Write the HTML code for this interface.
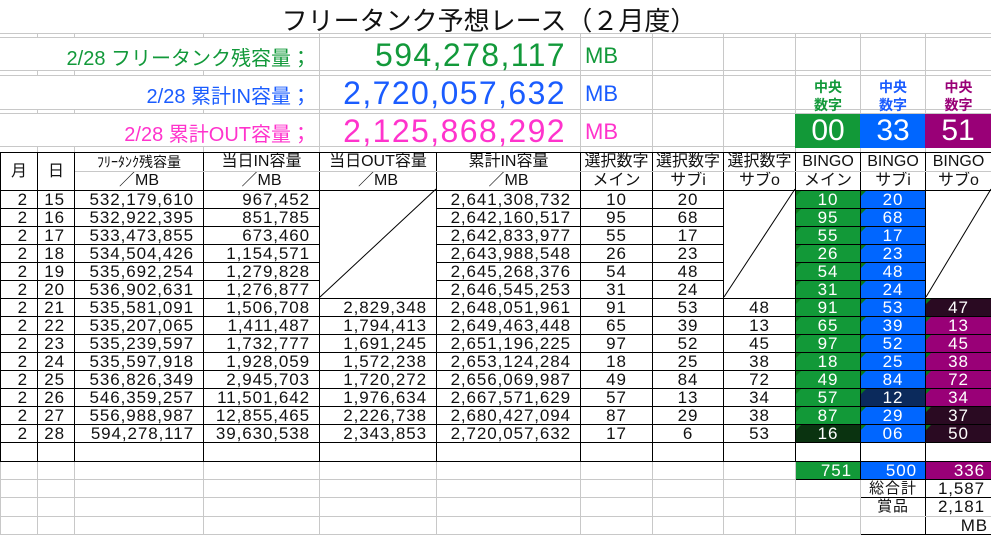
<!DOCTYPE html>
<html><head><meta charset="utf-8"><style>
body{margin:0;width:991px;height:533px;overflow:hidden;background:#fff;font-family:"Liberation Sans","Noto Sans CJK JP",sans-serif;position:relative}
.a{position:absolute;white-space:nowrap}
.hl{position:absolute;height:1px;background:#c8c8c8;left:0;width:991px}
.vl{position:absolute;width:1px;background:#c8c8c8}
.big{letter-spacing:1.4px}
table{position:absolute;left:0;top:152px;border-collapse:collapse;table-layout:fixed;width:991px}
td{border:1px solid #000;padding:0;font-size:17px;line-height:16px;overflow:hidden;white-space:nowrap;color:#111;letter-spacing:0.9px}
td.r{text-align:right;padding-right:9px}
td.c{text-align:center}
tr.d td{height:17px}
.h td{text-align:center;font-size:16px;height:18px;letter-spacing:0}
.h1 td{border-bottom:1px solid #c8c8c8}
.g{background:#129938;color:#fff!important;position:relative}
.b{background:#0066ff;color:#fff!important;position:relative}
.p{background:#990077;color:#fff!important;position:relative}
.dg{background:#0a3310;color:#fff!important;position:relative}
.db{background:#0b2a5c;color:#fff!important;position:relative}
.dp{background:#2a0a22;color:#fff!important;position:relative}
.t::before{content:"";position:absolute;left:0;top:0;border-top:5px solid #0a7a1a;border-right:5px solid transparent}
.lg td{border-color:#c8c8c8}
td.k{border:1px solid #000}
</style></head><body>
<div class="hl" style="top:33px"></div><div class="hl" style="top:37px"></div>
<div class="hl" style="top:70px"></div><div class="hl" style="top:75px"></div>
<div class="hl" style="top:109px"></div><div class="hl" style="top:113px"></div>
<div class="hl" style="top:146px"></div>
<div class="vl" style="left:319px;top:33px;height:119px"></div>
<div class="vl" style="left:580px;top:33px;height:119px"></div>
<div class="vl" style="left:652px;top:33px;height:119px"></div>
<div class="vl" style="left:723px;top:33px;height:119px"></div>
<div class="vl" style="left:795px;top:33px;height:119px"></div>
<div class="vl" style="left:860px;top:33px;height:119px"></div>
<div class="vl" style="left:925px;top:33px;height:119px"></div>
<div class="vl" style="left:37px;top:33px;height:4px"></div><div class="vl" style="left:74px;top:33px;height:4px"></div><div class="vl" style="left:203px;top:33px;height:4px"></div>
<div class="vl" style="left:37px;top:70px;height:5px"></div><div class="vl" style="left:74px;top:70px;height:5px"></div><div class="vl" style="left:203px;top:70px;height:5px"></div>
<div class="vl" style="left:37px;top:109px;height:4px"></div><div class="vl" style="left:74px;top:109px;height:4px"></div><div class="vl" style="left:203px;top:109px;height:4px"></div>
<div class="vl" style="left:37px;top:146px;height:6px"></div><div class="vl" style="left:74px;top:146px;height:6px"></div><div class="vl" style="left:203px;top:146px;height:6px"></div>

<div class="a" style="left:280px;top:1px;width:418px;text-align:center;font-size:26px;color:#111">フリータンク予想レース（２月度）</div>

<div class="a" style="right:680px;top:42px;font-size:20px;color:#12993a">2/28 フリータンク残容量；</div>
<div class="a" style="right:680px;top:80px;font-size:20px;color:#1a5cff">2/28 累計IN容量；</div>
<div class="a" style="right:680px;top:118px;font-size:20px;color:#ff33cc">2/28 累計OUT容量；</div>

<div class="a big" style="right:425px;top:37px;font-size:32px;color:#12993a">594,278,117</div>
<div class="a big" style="right:425px;top:75px;font-size:32px;color:#1a5cff">2,720,057,632</div>
<div class="a big" style="right:425px;top:113px;font-size:32px;color:#ff33cc">2,125,868,292</div>
<div class="a" style="left:585px;top:43px;font-size:22px;color:#12993a">MB</div>
<div class="a" style="left:585px;top:81px;font-size:22px;color:#1a5cff">MB</div>
<div class="a" style="left:585px;top:119px;font-size:22px;color:#ff33cc">MB</div>

<div class="a" style="left:796px;top:78px;width:64px;text-align:center;font-size:14px;line-height:18px;font-weight:bold;color:#12993a">中央<br>数字</div>
<div class="a" style="left:861px;top:78px;width:64px;text-align:center;font-size:14px;line-height:18px;font-weight:bold;color:#1a5cff">中央<br>数字</div>
<div class="a" style="left:926px;top:78px;width:65px;text-align:center;font-size:14px;line-height:18px;font-weight:bold;color:#990077">中央<br>数字</div>
<div class="a" style="left:795px;top:114px;width:66px;height:34px;background:#129938;color:#fff;font-size:30px;line-height:34px;text-align:center">00</div>
<div class="a" style="left:860px;top:114px;width:66px;height:34px;background:#0066ff;color:#fff;font-size:30px;line-height:34px;text-align:center">33</div>
<div class="a" style="left:925px;top:114px;width:66px;height:34px;background:#990077;color:#fff;font-size:30px;line-height:34px;text-align:center">51</div>

<table>
<colgroup><col style="width:37px"><col style="width:37px"><col style="width:129px"><col style="width:116px"><col style="width:117px"><col style="width:144px"><col style="width:72px"><col style="width:71px"><col style="width:72px"><col style="width:65px"><col style="width:65px"><col style="width:66px"></colgroup>
<tr class="h h1"><td rowspan="2" style="border-bottom:1px solid #000">月</td><td rowspan="2" style="border-bottom:1px solid #000">日</td><td style="font-size:14px">ﾌﾘｰﾀﾝｸ残容量</td><td>当日IN容量</td><td>当日OUT容量</td><td>累計IN容量</td><td>選択数字</td><td>選択数字</td><td>選択数字</td><td>BINGO</td><td>BINGO</td><td>BINGO</td></tr>
<tr class="h"><td>／MB</td><td>／MB</td><td>／MB</td><td>／MB</td><td>メイン</td><td>サブi</td><td>サブo</td><td>メイン</td><td>サブi</td><td>サブo</td></tr>
<tr class="d"><td class="r">2</td><td class="r">15</td><td class="r">532,179,610</td><td class="r">967,452</td><td rowspan="6"></td><td class="r">2,641,308,732</td><td class="c">10</td><td class="c">20</td><td rowspan="6"></td><td class="c g t">10</td><td class="c b t">20</td><td rowspan="6"></td></tr>
<tr class="d"><td class="r">2</td><td class="r">16</td><td class="r">532,922,395</td><td class="r">851,785</td><td class="r">2,642,160,517</td><td class="c">95</td><td class="c">68</td><td class="c g t">95</td><td class="c b t">68</td></tr>
<tr class="d"><td class="r">2</td><td class="r">17</td><td class="r">533,473,855</td><td class="r">673,460</td><td class="r">2,642,833,977</td><td class="c">55</td><td class="c">17</td><td class="c g t">55</td><td class="c b t">17</td></tr>
<tr class="d"><td class="r">2</td><td class="r">18</td><td class="r">534,504,426</td><td class="r">1,154,571</td><td class="r">2,643,988,548</td><td class="c">26</td><td class="c">23</td><td class="c g t">26</td><td class="c b t">23</td></tr>
<tr class="d"><td class="r">2</td><td class="r">19</td><td class="r">535,692,254</td><td class="r">1,279,828</td><td class="r">2,645,268,376</td><td class="c">54</td><td class="c">48</td><td class="c g t">54</td><td class="c b t">48</td></tr>
<tr class="d"><td class="r">2</td><td class="r">20</td><td class="r">536,902,631</td><td class="r">1,276,877</td><td class="r">2,646,545,253</td><td class="c">31</td><td class="c">24</td><td class="c g t">31</td><td class="c b t">24</td></tr>
<tr class="d"><td class="r">2</td><td class="r">21</td><td class="r">535,581,091</td><td class="r">1,506,708</td><td class="r">2,829,348</td><td class="r">2,648,051,961</td><td class="c">91</td><td class="c">53</td><td class="c">48</td><td class="c g t">91</td><td class="c b t">53</td><td class="c dp t">47</td></tr>
<tr class="d"><td class="r">2</td><td class="r">22</td><td class="r">535,207,065</td><td class="r">1,411,487</td><td class="r">1,794,413</td><td class="r">2,649,463,448</td><td class="c">65</td><td class="c">39</td><td class="c">13</td><td class="c g t">65</td><td class="c b t">39</td><td class="c p t">13</td></tr>
<tr class="d"><td class="r">2</td><td class="r">23</td><td class="r">535,239,597</td><td class="r">1,732,777</td><td class="r">1,691,245</td><td class="r">2,651,196,225</td><td class="c">97</td><td class="c">52</td><td class="c">45</td><td class="c g t">97</td><td class="c b t">52</td><td class="c p t">45</td></tr>
<tr class="d"><td class="r">2</td><td class="r">24</td><td class="r">535,597,918</td><td class="r">1,928,059</td><td class="r">1,572,238</td><td class="r">2,653,124,284</td><td class="c">18</td><td class="c">25</td><td class="c">38</td><td class="c g t">18</td><td class="c b t">25</td><td class="c p t">38</td></tr>
<tr class="d"><td class="r">2</td><td class="r">25</td><td class="r">536,826,349</td><td class="r">2,945,703</td><td class="r">1,720,272</td><td class="r">2,656,069,987</td><td class="c">49</td><td class="c">84</td><td class="c">72</td><td class="c g t">49</td><td class="c b t">84</td><td class="c p t">72</td></tr>
<tr class="d"><td class="r">2</td><td class="r">26</td><td class="r">546,359,257</td><td class="r">11,501,642</td><td class="r">1,976,634</td><td class="r">2,667,571,629</td><td class="c">57</td><td class="c">13</td><td class="c">34</td><td class="c g t">57</td><td class="c db t">12</td><td class="c p t">34</td></tr>
<tr class="d"><td class="r">2</td><td class="r">27</td><td class="r">556,988,987</td><td class="r">12,855,465</td><td class="r">2,226,738</td><td class="r">2,680,427,094</td><td class="c">87</td><td class="c">29</td><td class="c">38</td><td class="c g t">87</td><td class="c b t">29</td><td class="c dp t">37</td></tr>
<tr class="d"><td class="r">2</td><td class="r">28</td><td class="r">594,278,117</td><td class="r">39,630,538</td><td class="r">2,343,853</td><td class="r">2,720,057,632</td><td class="c">17</td><td class="c">6</td><td class="c">53</td><td class="c dg t">16</td><td class="c b t">06</td><td class="c dp t">50</td></tr>
<tr style="height:19px"><td></td><td></td><td></td><td></td><td></td><td></td><td></td><td></td><td></td><td></td><td></td><td></td></tr>
<tr class="lg" style="height:18px"><td></td><td></td><td></td><td></td><td></td><td></td><td></td><td></td><td></td><td class="r g k" style="padding-right:8px">751</td><td class="r b k" style="padding-right:8px">500</td><td class="r p k" style="padding-right:6px">336</td></tr>
<tr class="lg" style="height:18px"><td></td><td></td><td></td><td></td><td></td><td></td><td></td><td></td><td></td><td></td><td class="c k" style="font-size:15px">総合計</td><td class="r k" style="padding-right:6px">1,587</td></tr>
<tr class="lg" style="height:19px"><td></td><td></td><td></td><td></td><td></td><td></td><td></td><td></td><td></td><td></td><td class="c k" style="font-size:15px;border-bottom-color:#c8c8c8">賞品</td><td class="r k" style="padding-right:6px;border-bottom-color:#c8c8c8">2,181</td></tr>
<tr class="lg" style="height:18px"><td></td><td></td><td></td><td></td><td></td><td></td><td></td><td></td><td></td><td></td><td class="k" style="border-top-color:#c8c8c8"></td><td class="r k" style="padding-right:3px;border-top-color:#c8c8c8">MB</td></tr>
</table>
<svg class="a" style="left:0;top:0" width="991" height="533">
<line x1="320" y1="297" x2="436" y2="189" stroke="#000" stroke-width="1"/>
<line x1="724" y1="297" x2="795" y2="189" stroke="#000" stroke-width="1"/>
<line x1="926" y1="297" x2="991" y2="189" stroke="#000" stroke-width="1"/>
</svg>
</body></html>
